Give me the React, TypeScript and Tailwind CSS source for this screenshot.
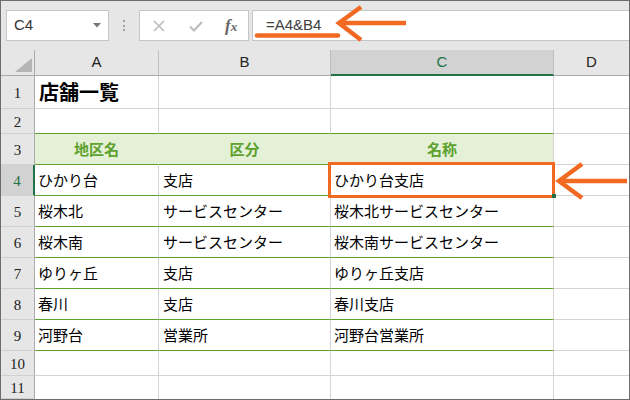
import React from "react";

const rows = [
  { n: 5, a: "桜木北", b: "サービスセンター", c: "桜木北サービスセンター" },
  { n: 6, a: "桜木南", b: "サービスセンター", c: "桜木南サービスセンター" },
  { n: 7, a: "ゆりヶ丘", b: "支店", c: "ゆりヶ丘支店" },
  { n: 8, a: "春川", b: "支店", c: "春川支店" },
  { n: 9, a: "河野台", b: "営業所", c: "河野台営業所" },
];

const jp = { fontFamily: '"Noto Sans CJK JP", "Noto Sans", sans-serif' };
const serif = { fontFamily: '"Liberation Serif", serif' };
const sans = { fontFamily: '"Liberation Sans", Arial, sans-serif' };

function RowHead({ n, h, active }: { n: number; h: string; active?: boolean }) {
  return (
    <div
      className={`w-[34px] shrink-0 flex items-center justify-center text-[15px] font-normal border-b border-b-[#d0d0d0] ${h} ${
        active
          ? "bg-[#d2d2d2] text-[#217346] border-r-2 border-r-[#217346]"
          : "bg-[#e6e6e6] text-[#222] border-r border-r-[#ababab]"
      }`}
      style={serif}
    >
      <span className="mt-[3px]">{n}</span>
    </div>
  );
}

export default function App() {
  return (
    <div className="relative w-[630px] h-[400px] border border-[#6d6d6d] bg-[#e6e6e6] overflow-hidden box-border">
      {/* top bar */}
      <div className="h-[49px] flex items-start pt-[9px] pl-[5px]">
        <div className="w-[103px] h-[31px] border border-[#c6c6c6] bg-white flex items-center justify-between pl-[7px] pr-[7px]">
          <span className="text-[15px] text-[#333]" style={sans}>C4</span>
          <svg width="8" height="5" viewBox="0 0 8 5"><path d="M0 0H8L4 4.5Z" fill="#777" /></svg>
        </div>
        <div className="w-[30px] h-[31px] flex flex-col items-center justify-center gap-[2.5px]">
          <div className="w-[2px] h-[2px] bg-[#a0a0a0]" />
          <div className="w-[2px] h-[2px] bg-[#a0a0a0]" />
          <div className="w-[2px] h-[2px] bg-[#a0a0a0]" />
        </div>
        <div className="w-[110px] h-[31px] border border-[#c6c6c6] bg-white flex items-center">
          <svg className="ml-[13px]" width="12" height="12" viewBox="0 0 12 12">
            <path d="M1 1L11 11M11 1L1 11" stroke="#bcbcbc" strokeWidth="1.6" />
          </svg>
          <svg className="ml-[24px]" width="14" height="12" viewBox="0 0 14 12">
            <path d="M1 6.5L5 10.5L13 2" stroke="#bcbcbc" strokeWidth="2" fill="none" />
          </svg>
          <span className="ml-[22px] italic text-[#666] leading-none font-bold" style={serif}>
            <span className="text-[17px]">f</span>
            <span className="text-[13px]">x</span>
          </span>
        </div>
        <div className="flex-1 ml-[3px] h-[31px] border border-[#c6c6c6] border-r-0 bg-white flex items-center pl-[13px]">
          <span className="text-[15px] text-[#404040]" style={sans}>=A4&amp;B4</span>
        </div>
      </div>

      {/* column headers */}
      <div className="flex h-[26px] text-[15px] text-[#222]" style={sans}>
        <div className="w-[34px] border-r border-r-[#ababab] border-b border-b-[#ababab] relative">
          <svg className="absolute left-[14px] top-[8px]" width="17" height="14" viewBox="0 0 17 14">
            <path d="M17 0V14H0Z" fill="#b5b5b5" />
          </svg>
        </div>
        <div className="w-[124px] border-r border-r-[#c0c0c0] border-b border-b-[#ababab] flex items-center justify-center">A</div>
        <div className="w-[172px] border-r border-r-[#c0c0c0] border-b border-b-[#ababab] flex items-center justify-center">B</div>
        <div className="w-[223px] bg-[#d2d2d2] border-r border-r-[#c0c0c0] border-b-2 border-b-[#217346] flex items-center justify-center text-[#217346]">C</div>
        <div className="w-[75px] border-b border-b-[#ababab] flex items-center justify-center">D</div>
      </div>

      <div className="bg-white text-black" style={jp}>
        {/* row 1 */}
        <div className="flex h-[33px]">
          <RowHead n={1} h="h-[33px]" />
          <div className="w-[124px] border-r border-b border-[#d4d4d4] flex items-center pl-[4px] text-[20px] font-bold whitespace-nowrap overflow-visible">店舗一覧</div>
          <div className="w-[172px] border-r border-b border-[#d4d4d4]" />
          <div className="w-[223px] border-r border-b border-[#d4d4d4]" />
          <div className="w-[75px] border-b border-[#d4d4d4]" />
        </div>
        {/* row 2 */}
        <div className="flex h-[25px]">
          <RowHead n={2} h="h-[25px]" />
          <div className="w-[124px] border-r border-r-[#d4d4d4] border-b border-b-[#5fa32d]" />
          <div className="w-[172px] border-r border-r-[#d4d4d4] border-b border-b-[#5fa32d]" />
          <div className="w-[223px] border-r border-r-[#d4d4d4] border-b border-b-[#5fa32d]" />
          <div className="w-[75px] border-b border-[#d4d4d4]" />
        </div>
        {/* row 3 */}
        <div className="flex h-[31px] text-[15px] text-[#5ea12e]">
          <RowHead n={3} h="h-[31px]" />
          <div className="w-[124px] bg-[#e4f1d6] border-r border-r-[#e4f1d6] border-b border-b-[#5fa32d] flex items-center justify-center font-bold">地区名</div>
          <div className="w-[172px] bg-[#e4f1d6] border-r border-r-[#e4f1d6] border-b border-b-[#5fa32d] flex items-center justify-center font-bold">区分</div>
          <div className="w-[223px] bg-[#e4f1d6] border-r border-r-[#d4d4d4] border-b border-b-[#5fa32d] flex items-center justify-center font-bold">名称</div>
          <div className="w-[75px] border-b border-[#d4d4d4]" />
        </div>
        {/* row 4 */}
        <div className="flex h-[31px] text-[15px]">
          <RowHead n={4} h="h-[31px]" active />
          <div className="w-[124px] border-r border-r-[#d4d4d4] border-b border-b-[#5fa32d] flex items-center pl-[3px]">ひかり台</div>
          <div className="w-[172px] border-r border-r-[#d4d4d4] border-b border-b-[#5fa32d] flex items-center pl-[4px]">支店</div>
          <div className="w-[223px] border-r border-r-[#d4d4d4] border-b border-b-[#5fa32d] flex items-center pl-[3px]">ひかり台支店</div>
          <div className="w-[75px] border-b border-[#d4d4d4]" />
        </div>
        {rows.map((r) => (
          <div key={r.n} className="flex h-[31px] text-[15px]">
            <RowHead n={r.n} h="h-[31px]" />
            <div className="w-[124px] border-r border-r-[#d4d4d4] border-b border-b-[#5fa32d] flex items-center pl-[3px]">{r.a}</div>
            <div className="w-[172px] border-r border-r-[#d4d4d4] border-b border-b-[#5fa32d] flex items-center pl-[4px]">{r.b}</div>
            <div className="w-[223px] border-r border-r-[#d4d4d4] border-b border-b-[#5fa32d] flex items-center pl-[3px]">{r.c}</div>
            <div className="w-[75px] border-b border-[#d4d4d4]" />
          </div>
        ))}
        {/* row 10 */}
        <div className="flex h-[25px]">
          <RowHead n={10} h="h-[25px]" />
          <div className="w-[124px] border-r border-b border-[#d4d4d4]" />
          <div className="w-[172px] border-r border-b border-[#d4d4d4]" />
          <div className="w-[223px] border-r border-b border-[#d4d4d4]" />
          <div className="w-[75px] border-b border-[#d4d4d4]" />
        </div>
        {/* row 11 */}
        <div className="flex h-[23px]">
          <RowHead n={11} h="h-[23px]" />
          <div className="w-[124px] border-r border-[#d4d4d4]" />
          <div className="w-[172px] border-r border-[#d4d4d4]" />
          <div className="w-[223px] border-r border-[#d4d4d4]" />
          <div className="w-[75px]" />
        </div>
      </div>

      {/* selection */}
      <div className="absolute left-[327px] top-[161px] w-[227px] h-[36px] border-[3px] border-[#f26a21]" />
      <div className="absolute left-[551px] top-[193px] w-[4px] h-[4px] bg-[#217346]" />

      {/* annotations */}
      <svg className="absolute left-[-1px] top-[-1px] pointer-events-none" width="630" height="400" viewBox="0 0 630 400">
        <line x1="257" y1="35.5" x2="338" y2="35.5" stroke="#f26a21" strokeWidth="4.5" strokeLinecap="round" />
        <g stroke="#f26a21" strokeWidth="4.5" fill="none">
          <line x1="340" y1="23" x2="406" y2="23" />
          <polyline points="361,7 339,23 361,40" strokeLinejoin="miter" />
          <line x1="560" y1="181" x2="627" y2="181" />
          <polyline points="582,164 559,181 582,198" strokeLinejoin="miter" />
        </g>
      </svg>
    </div>
  );
}
